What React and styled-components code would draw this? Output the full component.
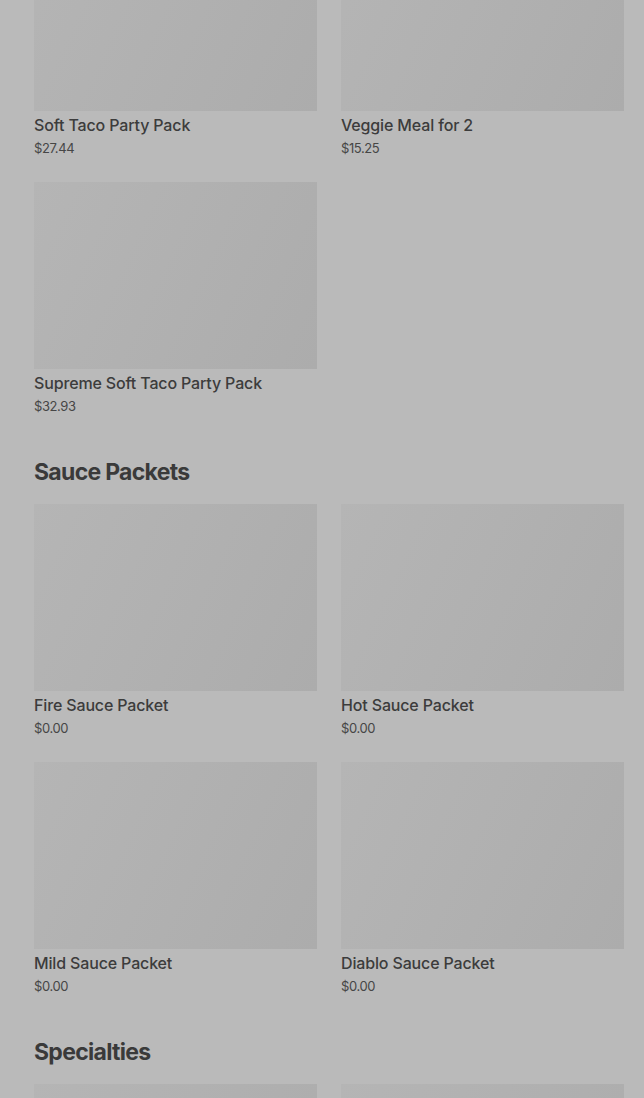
import React from "react";
import styled, { createGlobalStyle } from "styled-components";

const GlobalStyle = createGlobalStyle`
  html, body {
    margin: 0;
    padding: 0;
    background: #bababa;
    font-family: Inter, "Noto Sans", "Liberation Sans", sans-serif;
    overflow: hidden;
  }
`;

const Page = styled.div`
  width: 644px;
  height: 1098px;
  overflow: hidden;
  background: #bababa;
`;

const Menu = styled.div`
  margin-top: -76px;
  padding: 0 20px 0 34px;
  display: flex;
  flex-direction: column;
  gap: 40px;
`;

const Section = styled.section`
  display: flex;
  flex-direction: column;
`;

const Heading = styled.h2`
  margin: 0 0 16px;
  font-size: 23px;
  line-height: 32px;
  font-weight: 700;
  letter-spacing: -0.7px;
  color: #3a3a3a;
`;

const Grid = styled.div`
  display: grid;
  grid-template-columns: 283px 283px;
  column-gap: 24px;
  row-gap: 24px;
`;

const Card = styled.div`
  display: flex;
  flex-direction: column;
`;

const Photo = styled.div`
  height: 187px;
  background: linear-gradient(115deg, #b5b5b5 0%, #b1b1b1 45%, #acacac 100%);
`;

const Name = styled.div`
  margin-top: 4px;
  font-size: 16px;
  line-height: 20px;
  font-weight: 500;
  letter-spacing: -0.15px;
  color: #3c3c3c;
`;

const Price = styled.div`
  margin-top: 3px;
  font-size: 13px;
  line-height: 20px;
  color: #464646;
  letter-spacing: -0.4px;
`;

const sections = [
  {
    title: null,
    items: [
      ["Soft Taco Party Pack", "$27.44"],
      ["Veggie Meal for 2", "$15.25"],
      ["Supreme Soft Taco Party Pack", "$32.93"],
    ],
  },
  {
    title: "Sauce Packets",
    items: [
      ["Fire Sauce Packet", "$0.00"],
      ["Hot Sauce Packet", "$0.00"],
      ["Mild Sauce Packet", "$0.00"],
      ["Diablo Sauce Packet", "$0.00"],
    ],
  },
  {
    title: "Specialties",
    items: [
      ["", ""],
      ["", ""],
    ],
  },
];

export default function App() {
  return (
    <Page>
      <GlobalStyle />
      <Menu>
        {sections.map((s, i) => (
          <Section key={i}>
            {s.title && <Heading>{s.title}</Heading>}
            <Grid>
              {s.items.map(([name, price], j) => (
                <Card key={j}>
                  <Photo />
                  {name && <Name>{name}</Name>}
                  {price && <Price>{price}</Price>}
                </Card>
              ))}
            </Grid>
          </Section>
        ))}
      </Menu>
    </Page>
  );
}
